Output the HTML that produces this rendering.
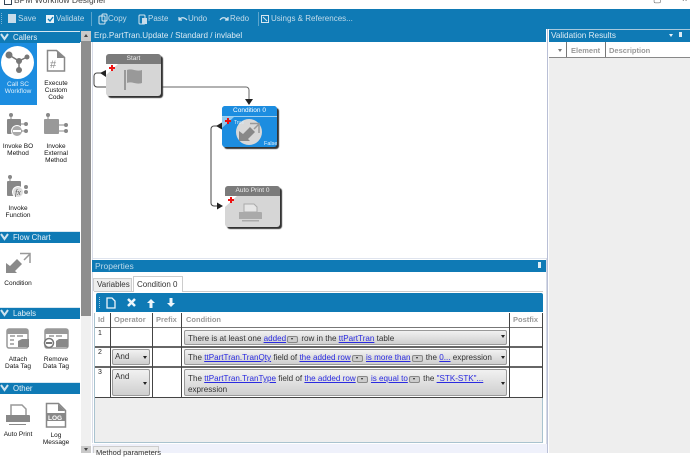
<!DOCTYPE html>
<html><head><meta charset="utf-8"><style>
html,body{margin:0;padding:0;background:#fff}
body{width:690px;height:453px;overflow:hidden;position:relative;font-family:"Liberation Sans",sans-serif;font-size:8px;color:#222}
.a,.t{position:absolute}
.t{white-space:nowrap}
.tb{color:#c4dcea;font-size:8px;top:14px}
.hd{position:absolute;left:0;width:80px;height:11px;background:#0f7ab5;color:#e8f2f8;font-size:7.800px;line-height:11px;border-top:1px solid #d7e7f1}
.hd span{position:absolute;left:13px;top:0}
.hd svg{position:absolute;left:0;top:1px}
.lb{position:absolute;text-align:center;font-size:6.500px;line-height:7px;width:40px;color:#111}
.node{position:absolute;border-radius:3px;background:#d6d6d6;box-shadow:2px 2px 1px #333}
.nh{position:absolute;left:0;top:0;right:0;height:10px;background:#7b7b7b;color:#eee;text-align:center;font-size:6.500px;line-height:10px;border-radius:3px 3px 0 0}
.c{position:absolute;background:#777}
a{color:#2a2ae0;text-decoration:underline}
.dd{position:absolute;border:1px solid #999;border-radius:2px;background:linear-gradient(#f1f1f1,#cfcfcf);font-size:8.100px;line-height:11px;color:#333;white-space:nowrap;box-sizing:border-box}
.ar{position:absolute;width:0;height:0;border-left:2px solid transparent;border-right:2px solid transparent;border-top:3px solid #222}
.m{display:inline-block;position:relative;width:9px;height:5px;background:#ccc;border:1px solid #888;border-radius:2px;vertical-align:-2px;margin:0 1px}
.m::after{content:"";position:absolute;left:3px;top:1px;border-left:1.500px solid transparent;border-right:1.500px solid transparent;border-top:2px solid #222}
.th{position:absolute;top:313px;height:14px;color:#999;font-size:7.500px;font-weight:bold;line-height:14px}
</style></head><body>
<div class="t" style="left:14px;top:-5px;font-size:8.500px;color:#444">BPM Workflow Designer</div>
<div class="a" style="left:4px;top:-2px;width:6px;height:5px;border:1px solid #345"></div>
<div class="t" style="left:653px;top:-6px;color:#555;font-size:9px">▢</div>
<div class="t" style="left:682px;top:-6px;color:#555;font-size:9px">×</div>
<div class="a" style="left:0;top:9px;width:690px;height:33px;background:#0f7ab5"></div>
<div class="a" style="left:546px;top:29px;width:3px;height:13px;background:#fff"></div>
<div class="a" style="left:0;top:42px;width:92px;height:411px;background:#fff"></div>
<svg class="a" style="left:0;top:12px" width="370" height="14" fill="none" stroke="#d5e6f0">
<path d="M1.500 1v12" stroke="#7db4d4" stroke-dasharray="1 1"/>
<rect x="8" y="2" width="8" height="9" fill="#c8dcea" stroke="none"/>
<rect x="46" y="3" width="8" height="8" fill="#e8f2f8" stroke="none"/><path d="M48 7l2 2 3-4" stroke="#0f7ab5" stroke-width="1.300"/>
<path d="M91.500 0v14M258.500 0v14" stroke="#5ba4cc"/>
<rect x="99" y="4" width="6" height="8" rx="1"/><rect x="102" y="2" width="5" height="7" rx="1"/>
<rect x="139" y="3" width="6" height="9" rx="1"/><rect x="142" y="6" width="5" height="6" fill="#c8dcea" stroke="none"/>
<path d="M179 8c2-3 5-3 8 0M179 5v3h3M220 8c2-3 5-3 8 0M228 5v3h-3" stroke-width="1.200"/>
<rect x="261.500" y="3.500" width="7" height="7"/><path d="M263 5l4 4"/>
</svg>
<div class="t tb" style="left:18px">Save</div>
<div class="t tb" style="left:56px">Validate</div>
<div class="t tb" style="left:108px">Copy</div>
<div class="t tb" style="left:148px">Paste</div>
<div class="t tb" style="left:188px">Undo</div>
<div class="t tb" style="left:230px">Redo</div>
<div class="t tb" style="left:271px">Usings &amp; References...</div>
<div class="t" style="left:94px;top:31px;font-size:8.100px;color:#dcebf4">Erp.PartTran.Update / Standard / invlabel</div>
<div class="a" style="left:92px;top:42px;width:1px;height:401px;background:#d8dce8"></div>

<div class="hd" style="top:31px"><svg width="9" height="8" fill="none" stroke="#cfe3ef" stroke-width="2"><path d="M1 1l3.500 5L8 1"/></svg><span>Callers</span></div>
<div class="hd" style="top:231px"><svg width="9" height="8" fill="none" stroke="#cfe3ef" stroke-width="2"><path d="M1 1l3.500 5L8 1"/></svg><span>Flow Chart</span></div>
<div class="hd" style="top:307px"><svg width="9" height="8" fill="none" stroke="#cfe3ef" stroke-width="2"><path d="M1 1l3.500 5L8 1"/></svg><span>Labels</span></div>
<div class="hd" style="top:382px"><svg width="9" height="8" fill="none" stroke="#cfe3ef" stroke-width="2"><path d="M1 1l3.500 5L8 1"/></svg><span>Other</span></div>

<div class="a" style="left:81px;top:31px;width:10px;height:285px;background:#8e8e8e"></div>
<div class="a" style="left:81px;top:316px;width:10px;height:137px;background:#f0f0f0"></div>
<div class="a" style="left:81px;top:31px;width:10px;height:10px;background:#c9c9c9"></div>
<div class="a" style="left:84px;top:34px;width:0;height:0;border-left:2.500px solid transparent;border-right:2.500px solid transparent;border-bottom:3px solid #444"></div>
<div class="a" style="left:81px;top:446px;width:10px;height:7px;background:#c9c9c9"></div>
<div class="a" style="left:84px;top:448px;width:0;height:0;border-left:2.500px solid transparent;border-right:2.500px solid transparent;border-top:3px solid #444"></div>

<div class="a" style="left:0;top:43px;width:37px;height:62px;background:#1c8de0"></div>
<div class="a" style="left:1px;top:46px;width:33px;height:33px;border-radius:50%;background:#fff"></div>
<svg class="a" style="left:0;top:0" width="80" height="453" fill="#888" stroke="none">
<path d="M9 55L19 61L27 57M19 61V70" stroke="#777" stroke-width="1.500" fill="none"/>
<circle cx="9" cy="55" r="3.500" fill="#777"/><circle cx="19" cy="61" r="3" fill="#777"/><circle cx="27" cy="57" r="2.500" fill="#777"/><circle cx="19" cy="70" r="3" fill="#777"/>
<path d="M47.500 50.500h9l8 7v13.500h-17z" fill="#fff" stroke="#888" stroke-width="1.500"/><path d="M57 51l7 7h-7z"/>
<text x="50" y="68" font-size="11" fill="#888" font-family="Liberation Sans">#</text>
<circle cx="11" cy="115" r="2"/><rect x="10.500" y="115" width="1" height="4"/><rect x="7" y="119" width="14" height="15" rx="1"/><circle cx="17" cy="131" r="5.500" fill="#aaa" stroke="#fff"/><rect x="13" y="130" width="8" height="2" fill="#fff"/><circle cx="26" cy="124" r="2"/><circle cx="26" cy="131" r="2"/><path d="M21 124h4M21 131h4" stroke="#888"/>
<circle cx="48" cy="115" r="2"/><rect x="47.500" y="115" width="1" height="4"/><rect x="44" y="119" width="15" height="15" rx="1" fill="#999"/><circle cx="66" cy="125" r="2"/><circle cx="66" cy="131" r="2"/><path d="M59 125h6M59 131h6" stroke="#888"/>
<circle cx="10" cy="177" r="2"/><rect x="9.500" y="177" width="1" height="4"/><rect x="7" y="181" width="14" height="15" rx="1"/><circle cx="18" cy="192" r="5.500" fill="#ddd" stroke="#fff"/><text x="15" y="195" font-size="8" font-style="italic" fill="#555" font-family="Liberation Serif">fx</text><circle cx="26" cy="187" r="2"/><circle cx="26" cy="192" r="2"/>
<path d="M6 273V263l4 3 7-7 5 5-7 7 2 2z" fill="#8a8a8a"/><path d="M20 253.500H30V263M30 254l-6 6" fill="none" stroke="#999" stroke-width="1.500"/>
<rect x="7" y="329" width="21" height="19" rx="2" fill="#fff" stroke="#999" stroke-width="1.500"/><rect x="7" y="329" width="21" height="5" fill="#999"/><path d="M10 336h5M17 336h6M10 340h4M10 344h4" stroke="#999" stroke-width="1.500"/><path d="M18 347v-6l4-2h7v8z"/>
<rect x="45" y="329" width="23" height="19" rx="2" fill="#fff" stroke="#999" stroke-width="1.500"/><rect x="45" y="329" width="23" height="5" fill="#999"/><path d="M49 336h5M56 336h6" stroke="#999" stroke-width="1.500"/><path d="M56 347v-6l3-2h9v8z"/><circle cx="49" cy="343" r="4.500" fill="#fff" stroke="#777" stroke-width="1.500"/><rect x="46" y="342" width="6" height="2" fill="#777"/>
<path d="M11 405h11l4 4v7h-15z" fill="#fff" stroke="#999" stroke-width="1.500"/><path d="M6 415h23a1 1 0 0 1 1 1v6h-24z"/><rect x="9" y="424" width="17" height="1"/>
<path d="M46.500 403.500h12l7 7v16.500h-19z" fill="#fff" stroke="#888" stroke-width="1.500"/><path d="M58 404l7 7h-7z"/><rect x="46" y="413" width="20" height="8" fill="#888"/><text x="48" y="420" font-size="6.500" font-weight="bold" fill="#fff" font-family="Liberation Sans">LOG</text>
</svg>
<div class="lb" style="left:-2px;top:81px;color:#dff0fb">Call SC<br>Workflow</div>
<div class="lb" style="left:36px;top:80px">Execute<br>Custom<br>Code</div>
<div class="lb" style="left:-2px;top:143px">Invoke BO<br>Method</div>
<div class="lb" style="left:36px;top:143px">Invoke<br>External<br>Method</div>
<div class="lb" style="left:-2px;top:205px">Invoke<br>Function</div>
<div class="lb" style="left:-2px;top:280px">Condition</div>
<div class="lb" style="left:-2px;top:356px">Attach<br>Data Tag</div>
<div class="lb" style="left:36px;top:356px">Remove<br>Data Tag</div>
<div class="lb" style="left:-2px;top:431px">Auto Print</div>
<div class="lb" style="left:36px;top:432px">Log<br>Message</div>

<svg class="a" style="left:92px;top:42px" width="456" height="215" fill="none">
<path d="M69 45H154a3 3 0 0 1 3 3V60" stroke="#666"/>
<path d="M14 31H5a3 3 0 0 0-3 3v8a3 3 0 0 0 3 3h10" stroke="#444"/>
<path d="M130 84h-8a3 3 0 0 0-3 3v74a3 3 0 0 0 3 3h8" stroke="#444"/>
<path d="M8 31l6-3v7z M124 84l6-3.500v7z M131 164l-6-3.500v7z" fill="#222"/>
<path d="M153 57h8l-4 6z" fill="#222"/>
</svg>

<div class="node" style="left:106px;top:54px;width:55px;height:42px"><div class="nh">Start</div>
<svg class="a" style="left:0;top:10px" width="55" height="32"><path d="M0 0h12L0 11z" fill="#fff"/><path d="M3 4h6M6 1v6" stroke="#e11" stroke-width="2"/><rect x="18" y="6" width="2" height="20" fill="#999"/><path d="M21 6c5-2 9 2 15 0v13c-6 2-10-2-15 0z" fill="#999"/></svg></div>

<div class="node" style="left:222px;top:106px;width:55px;height:41px;background:#1c8de0"><div class="nh" style="background:#1c8de0;border-bottom:1px solid #9fd0f0;color:#fff">Condition 0</div>
<svg class="a" style="left:0;top:10px" width="55" height="31"><path d="M0 1h12L0 12z" fill="#8fc8ee"/><path d="M3 5h6M6 2v6" stroke="#e11" stroke-width="2"/><circle cx="27" cy="16" r="13" fill="#d8d8d8"/><path d="M17 25V15l4 3 7-7 5 5-7 7 2 2z" fill="#888"/><path d="M28 7.500H37V17M37 8l-5 5" stroke="#999" stroke-width="1.500" fill="none"/><text x="12" y="8" font-size="5" fill="#d8ecf9" font-family="Liberation Sans">True</text><text x="42" y="29" font-size="5.500" fill="#e8f4fc" font-family="Liberation Sans">False</text></svg></div>

<div class="node" style="left:225px;top:186px;width:55px;height:41px"><div class="nh">Auto Print 0</div>
<svg class="a" style="left:0;top:10px" width="55" height="31"><path d="M0 0h12L0 11z" fill="#fff"/><path d="M3 4h6M6 1v6" stroke="#e11" stroke-width="2"/><path d="M19 8h10l3 3v5H19z" fill="#e6e6e6" stroke="#aaa"/><path d="M14 16h22a1 1 0 0 1 1 1v6H14z" fill="#aaa"/><rect x="17" y="24" width="17" height="1.500" fill="#aaa"/></svg></div>

<div class="a" style="left:547px;top:29px;width:1px;height:424px;background:#b9bfd6"></div>
<div class="a" style="left:549px;top:29px;width:141px;height:13px;background:#0f7ab5;border-top:1px solid #a8c9dd;box-sizing:border-box"></div>
<div class="t" style="left:551px;top:31px;font-size:8.200px;color:#dcebf4">Validation Results</div>
<div class="a" style="left:669px;top:34px;border-left:2.500px solid transparent;border-right:2.500px solid transparent;border-top:3px solid #e8f2f8"></div>
<div class="a" style="left:679px;top:32px;width:3px;height:5px;background:#dcebf4"></div>
<div class="a" style="left:549px;top:42px;width:141px;height:16px;background:#fff;border-bottom:1px solid #888;box-sizing:border-box"></div>
<div class="a" style="left:558px;top:49px;border-left:2px solid transparent;border-right:2px solid transparent;border-top:3px solid #777"></div>
<div class="a" style="left:566px;top:42px;width:1px;height:15px;background:#777"></div>
<div class="a" style="left:605px;top:42px;width:1px;height:15px;background:#777"></div>
<div class="t" style="left:571px;top:46px;font-size:7.500px;font-weight:bold;color:#999">Element</div>
<div class="t" style="left:609px;top:46px;font-size:7.500px;font-weight:bold;color:#999">Description</div>
<div class="a" style="left:549px;top:58px;width:141px;height:395px;background:#eee"></div>

<div class="a" style="left:92px;top:260px;width:454px;height:12px;background:#0f7ab5"></div>
<div class="t" style="left:95px;top:261px;font-size:8.500px;color:#bcd9ea">Properties</div>
<div class="a" style="left:538px;top:262px;width:3px;height:6px;background:#e0eef6"></div>
<div class="a" style="left:94px;top:291px;width:449px;height:1px;background:#ccc"></div>
<div class="a" style="left:93px;top:278px;width:39px;height:13px;background:#eee;border:1px solid #ccc;border-bottom:0;box-sizing:border-box"></div>
<div class="t" style="left:97px;top:280px;font-size:8px;color:#333">Variables</div>
<div class="a" style="left:133px;top:276px;width:50px;height:16px;background:#fff;border:1px solid #ccc;border-bottom:0;box-sizing:border-box"></div>
<div class="t" style="left:137px;top:280px;font-size:8px;color:#333">Condition 0</div>

<div class="a" style="left:96px;top:293px;width:447px;height:19px;background:#0f7ab5;border-radius:2px 2px 0 0"></div>
<svg class="a" style="left:96px;top:293px" width="90" height="19" fill="none">
<path d="M3.500 4v11" stroke="#9cc6de" stroke-dasharray="1 1"/>
<path d="M11 5h5l3 3v7h-8z" stroke="#eef6fb" stroke-width="1.300"/>
<path d="M32 6l7 7M39 6l-7 7" stroke="#eef6fb" stroke-width="2.500"/>
<path d="M55 6l-4 4h2.500v5h3v-5H59z" fill="#eef6fb"/>
<path d="M75 14l-4-4h2.500V5h3v5H79z" fill="#eef6fb"/>
</svg>

<div class="a" style="left:94px;top:313px;width:449px;height:130px;background:#eee;border:1px solid #a9c3cf;box-sizing:border-box"></div>
<div class="a" style="left:95px;top:313px;width:448px;height:84px;background:#fff"></div>
<div class="th" style="left:98px">Id</div>
<div class="th" style="left:114px">Operator</div>
<div class="th" style="left:156px">Prefix</div>
<div class="th" style="left:186px">Condition</div>
<div class="th" style="left:513px">Postfix</div>
<div class="c" style="left:95px;top:327px;width:448px;height:1px"></div>
<div class="c" style="left:95px;top:346px;width:448px;height:2px;background:#666"></div>
<div class="c" style="left:95px;top:366px;width:448px;height:2px;background:#666"></div>
<div class="c" style="left:95px;top:397px;width:448px;height:1px;background:#444"></div>
<div class="c" style="left:110px;top:313px;width:1px;height:85px;background:#444"></div>
<div class="c" style="left:152px;top:313px;width:1px;height:85px;background:#444"></div>
<div class="c" style="left:181px;top:313px;width:1px;height:85px;background:#444"></div>
<div class="c" style="left:509px;top:313px;width:1px;height:85px;background:#444"></div>
<div class="c" style="left:542px;top:313px;width:1px;height:85px;background:#444"></div>
<div class="t" style="left:98px;top:330px;font-size:7px">1</div>
<div class="t" style="left:98px;top:349px;font-size:7px">2</div>
<div class="t" style="left:98px;top:369px;font-size:7px">3</div>

<div class="dd" style="left:112px;top:349px;width:38px;height:16px;padding:1px 0 0 2px">And<i class="ar" style="left:30px;top:6px"></i></div>
<div class="dd" style="left:112px;top:369px;width:38px;height:27px;padding:1px 0 0 2px">And<i class="ar" style="left:30px;top:12px"></i></div>

<div class="dd" style="left:184px;top:330px;width:323px;height:15px;padding:2px 0 0 3px">There is at least one <a>added</a><span class="m"></span> row in the <a>ttPartTran</a> table<i class="ar" style="left:316px;top:4px"></i></div>
<div class="dd" style="left:184px;top:349px;width:323px;height:16px;padding:2px 0 0 3px">The <a>ttPartTran.TranQty</a> field of <a>the added row</a><span class="m"></span> <a>is more than</a><span class="m"></span> the <a>0...</a> expression<i class="ar" style="left:316px;top:6px"></i></div>
<div class="dd" style="left:184px;top:369px;width:323px;height:27px;padding:3px 0 0 3px">The <a>ttPartTran.TranType</a> field of <a>the added row</a><span class="m"></span> <a>is equal to</a><span class="m"></span> the <a>"STK-STK"...</a><br>expression<i class="ar" style="left:316px;top:12px"></i></div>

<div class="a" style="left:92px;top:444px;width:455px;height:9px;background:#eff1fb"></div>
<div class="a" style="left:93px;top:446px;width:66px;height:7px;background:#eee;border:1px solid #ccc;border-bottom:0;box-sizing:border-box"></div>
<div class="t" style="left:96px;top:448px;font-size:7.500px;color:#333">Method parameters</div>
<div class="a" style="left:546px;top:258px;width:1px;height:186px;background:#d5dae6"></div>
<div class="a" style="left:93px;top:258px;width:453px;height:1px;background:#dfe4ee"></div>
</body></html>
